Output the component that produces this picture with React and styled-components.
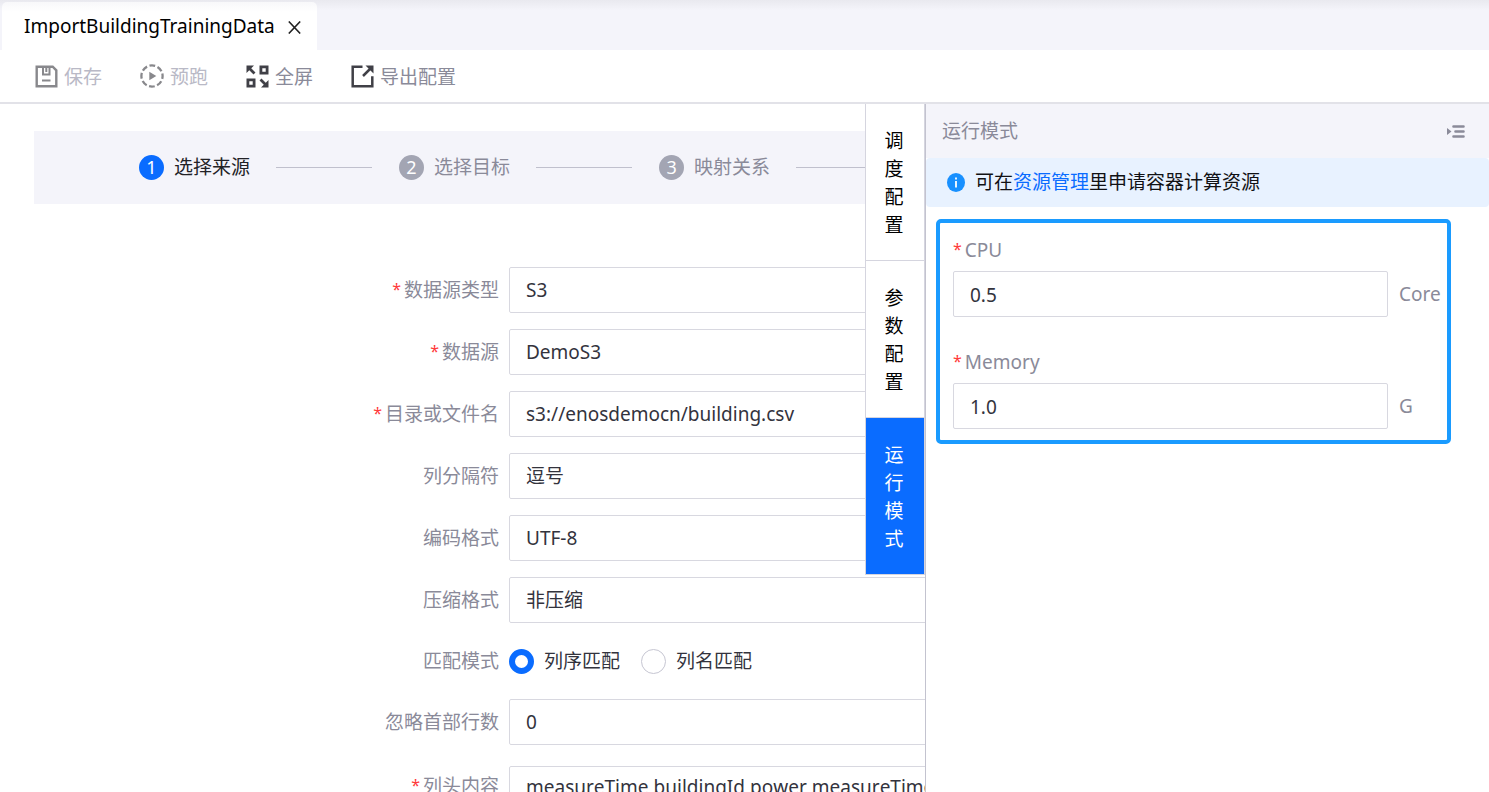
import React, { useState } from "react";
import styled, { createGlobalStyle, css } from "styled-components";

const Global = createGlobalStyle`
  *, *::before, *::after { box-sizing: border-box; }
  body {
    margin: 0;
    background: #fff;
    color: #33333d;
    font-family: "Noto Sans", "Noto Sans CJK SC", sans-serif;
    font-size: 19px;
    line-height: 28px;
  }
  button, input, select, textarea { font: inherit; color: inherit; }
`;

const Page = styled.div`
  display: flex;
  flex-direction: column;
  height: 100vh;
  overflow: hidden;
`;

const TabBar = styled.header`
  display: flex;
  flex: none;
  height: 50px;
  padding: 2px 2px 0;
  background: linear-gradient(#e9e9ef, #f4f4fa 10px);
`;

const FileTab = styled.div`
  display: flex;
  align-items: center;
  gap: 13px;
  padding: 0 16px 0 22px;
  border-radius: 5px 5px 0 0;
  background: linear-gradient(#f8f8fa, #fff 10px);
  color: #000;
`;

const IconButton = styled.button`
  display: flex;
  padding: 2px 0 0;
  border: 0;
  background: none;
  color: ${(p) => p.$color || "#222"};
  cursor: pointer;
`;

const Toolbar = styled.nav`
  display: flex;
  flex: none;
  align-items: center;
  gap: 38px;
  height: 54px;
  padding: 0 35px;
  border-bottom: 2px solid #e2e2e8;
`;

const ToolButton = styled.button`
  display: flex;
  align-items: center;
  gap: 6px;
  padding: 0;
  border: 0;
  background: none;
  color: #8a8a99;
  cursor: pointer;
  svg { color: #404047; }
  &:disabled {
    color: #b9b9c6;
    cursor: default;
    svg { color: #88888c; }
  }
`;

const ToolText = styled.span`
  padding-top: 2px;
`;

const Workspace = styled.div`
  display: flex;
  flex: 1;
  min-height: 0;
`;

const Canvas = styled.main`
  position: relative;
  flex: 1;
  min-width: 0;
  overflow: hidden;
`;

const Content = styled.div`
  min-width: 1100px;
  padding: 27px 34px;
`;

const Steps = styled.ol`
  display: flex;
  align-items: center;
  height: 73px;
  margin: 0 0 63px;
  padding: 0 105px 1px;
  background: #f4f4fa;
  list-style: none;
`;

const Step = styled.li`
  display: flex;
  align-items: center;
  color: ${(p) => (p.$active ? "#222226" : "#8a8a99")};
  &::after {
    content: "";
    width: 96px;
    height: 1px;
    margin: 0 27px 0 26px;
    background: #c0c0cd;
  }
`;

const StepNumber = styled.span`
  display: grid;
  place-items: center;
  width: 25px;
  height: 25px;
  margin-right: 10px;
  border-radius: 50%;
  background: ${(p) => (p.$active ? "#0a6cff" : "#a3a5b3")};
  color: #fff;
  font-size: 18px;
  line-height: 24px;
`;

const Form = styled.form`
  display: flex;
  flex-direction: column;
  gap: 16px;
`;

const Label = styled.label`
  color: #8a8a99;
  text-align: ${(p) => (p.$left ? "left" : "right")};
  ${(p) =>
    p.$required &&
    css`
      &::before {
        content: "*";
        margin-right: 3px;
        color: #ff3a3a;
        font-size: 16px;
        line-height: 16px;
        vertical-align: 2px;
      }
    `}
`;

const Row = styled.div`
  display: grid;
  grid-template-columns: 465px 1fr;
  column-gap: 10px;
  align-items: ${(p) => (p.$top ? "start" : "center")};
  padding-top: ${(p) => (p.$top ? "5px" : "0")};
  ${Label} { padding-top: ${(p) => (p.$top ? "6px" : "0")}; }
`;

const control = css`
  display: block;
  width: 100%;
  height: 46px;
  padding: 0 16px;
  border: 1px solid #d8d8e0;
  border-radius: 2px;
  background: #fff;
  font-kerning: none;
  outline: 0;
  &:focus { border-color: #0a6cff; }
`;

const TextInput = styled.input`${control}`;

const Select = styled.select`
  ${control}
  appearance: none;
`;

const TextArea = styled.textarea`
  ${control}
  height: 90px;
  padding-top: 6px;
  resize: none;
`;

const RadioGroup = styled.div`
  display: flex;
  align-items: center;
  gap: 21px;
  height: 44px;
`;

const RadioLabel = styled.label`
  display: flex;
  align-items: center;
  gap: 10px;
`;

const Radio = styled.input`
  appearance: none;
  width: 25px;
  height: 25px;
  margin: 0;
  border: 1px solid #c6c6d2;
  border-radius: 50%;
  background: #fff;
  &:checked {
    border: 6px solid #0a6cff;
  }
`;

const SideTabs = styled.div`
  position: absolute;
  top: 0;
  right: 0;
  width: 60px;
  border: 1px solid #d5d5df;
  border-top: 0;
  background: #fff;
`;

const SideTab = styled.button`
  display: block;
  width: 100%;
  height: 157px;
  padding: 1px 20px 0 18px;
  border: 0;
  border-bottom: 1px solid #d5d5df;
  background: ${(p) => (p.$active ? "#0a6cff" : "#fff")};
  color: ${(p) => (p.$active ? "#fff" : "#000")};
  cursor: pointer;
  &:last-child {
    height: 156px;
    border-bottom: 0;
  }
`;

const Panel = styled.aside`
  flex: none;
  width: 564px;
  border-left: 1px solid #c3c3cf;
  background: #fff;
`;

const PanelHeader = styled.div`
  display: flex;
  align-items: center;
  justify-content: space-between;
  height: 54px;
  padding: 0 24px 0 16px;
  background: #f4f4fa;
  color: #8a8a99;
`;

const PanelTitle = styled.h2`
  margin: 0;
  font-size: 19px;
  font-weight: 400;
`;

const Notice = styled.div`
  display: flex;
  align-items: center;
  gap: 10px;
  height: 49px;
  padding: 0 21px 1px;
  border-radius: 4px;
  background: #e8f2ff;
  color: #111114;
  a { color: #0a6cff; text-decoration: none; }
`;

const Resources = styled.form`
  display: flex;
  flex-direction: column;
  gap: 31px;
  margin: 12px 38px 0 10px;
  padding: 13px 4px 11px 13px;
  border: 4px solid #1a9bff;
  border-radius: 5px;
`;

const Resource = styled.div`
  display: grid;
  grid-template-columns: 1fr 44px;
  gap: 7px 11px;
  align-items: center;
  ${Label} { grid-column: 1 / -1; }
  ${TextInput} { padding-top: 2px; }
`;

const Unit = styled.span`
  color: #8a8a99;
`;

const CloseIcon = () => (
  <svg width="13" height="13" viewBox="0 0 13 13" fill="none" stroke="currentColor" strokeWidth="1.6" aria-hidden="true">
    <path d="M.8 .5l11.400 12M12.200 .5l-11.400 12" />
  </svg>
);

const SaveIcon = () => (
  <svg width="23" height="23" viewBox="0 0 23 23" fill="none" stroke="currentColor" strokeWidth="2.4" aria-hidden="true">
    <path d="M1.700 1.700h16l3.600 3.600v16h-19.600z" />
    <path d="M8 2v7.500h6.500v-7.500M11.300 3v4M7 15.500h8.500" strokeWidth="2" />
  </svg>
);

const RunIcon = () => (
  <svg width="24" height="24" viewBox="0 0 24 24" fill="none" stroke="currentColor" aria-hidden="true">
    <circle cx="12" cy="12" r="10.600" strokeWidth="2.300" strokeDasharray="5.800 2.525" strokeDashoffset="2.900" />
    <path d="M9.300 7.800v8.400l7-4.200z" fill="currentColor" stroke="none" />
  </svg>
);

const FullscreenIcon = () => (
  <svg width="23" height="23" viewBox="0 0 23 23" fill="none" stroke="currentColor" strokeWidth="2.800" aria-hidden="true">
    <path d="M14.900 1.900h6.200v6.200h-6.200zM1.900 14.900h6.200v6.200h-6.200z" />
    <path d="M2.500 2.500l6 6M14.500 14.500l6 6" />
    <path d="M.5.500h7.500l-7.500 7.500zM22.500 22.500v-7.500l-7.500 7.500z" fill="currentColor" stroke="none" />
  </svg>
);

const ExportIcon = () => (
  <svg width="23" height="23" viewBox="0 0 23 23" fill="none" stroke="currentColor" strokeWidth="2.500" aria-hidden="true">
    <path d="M11.500 1.700h-9.800v19.600h19.600v-10" />
    <path d="M12 11l7.500-7.500" />
    <path d="M14.500.500h8v8z" fill="currentColor" stroke="none" />
  </svg>
);

const CollapseIcon = () => (
  <svg width="18" height="14" viewBox="0 0 18 14" aria-hidden="true">
    <path d="M0 3v7l4.500-3.500z" fill="currentColor" />
    <path d="M6.500 1.500h10M8.500 6.500h8M6.500 11.500h10" stroke="currentColor" strokeWidth="2.600" strokeLinecap="round" />
  </svg>
);

const InfoIcon = () => (
  <svg width="18" height="19" viewBox="0 0 18 19" aria-hidden="true">
    <ellipse cx="9" cy="9.500" rx="9" ry="9.500" fill="#1890ff" />
    <path d="M9 4.500v2M9 8v6.500" stroke="#fff" strokeWidth="1.800" />
  </svg>
);

const steps = ["选择来源", "选择目标", "映射关系"];
const sideTabs = ["调度配置", "参数配置", "运行模式"];

const SelectRow = ({ id, label, required, value }) => (
  <Row>
    <Label htmlFor={id} $required={required}>{label}</Label>
    <Select id={id} defaultValue={value}>
      <option>{value}</option>
    </Select>
  </Row>
);

const InputRow = ({ id, label, required, value }) => (
  <Row>
    <Label htmlFor={id} $required={required}>{label}</Label>
    <TextInput id={id} defaultValue={value} />
  </Row>
);

const ResourceField = ({ id, label, value, unit }) => (
  <Resource>
    <Label htmlFor={id} $required $left>{label}</Label>
    <TextInput id={id} defaultValue={value} />
    <Unit>{unit}</Unit>
  </Resource>
);

export default function App() {
  const [active, setActive] = useState("运行模式");
  return (
    <Page>
      <Global />
      <TabBar>
        <FileTab>
          <span>ImportBuildingTrainingData</span>
          <IconButton type="button" aria-label="关闭"><CloseIcon /></IconButton>
        </FileTab>
      </TabBar>
      <Toolbar>
        <ToolButton type="button" disabled><SaveIcon /><ToolText>保存</ToolText></ToolButton>
        <ToolButton type="button" disabled><RunIcon /><ToolText>预跑</ToolText></ToolButton>
        <ToolButton type="button"><FullscreenIcon /><ToolText>全屏</ToolText></ToolButton>
        <ToolButton type="button"><ExportIcon /><ToolText>导出配置</ToolText></ToolButton>
      </Toolbar>
      <Workspace>
        <Canvas>
          <Content>
            <Steps>
              {steps.map((name, i) => (
                <Step key={name} $active={i === 0}>
                  <StepNumber $active={i === 0}>{i + 1}</StepNumber>
                  {name}
                </Step>
              ))}
            </Steps>
            <Form>
              <SelectRow id="type" label="数据源类型" required value="S3" />
              <SelectRow id="source" label="数据源" required value="DemoS3" />
              <InputRow id="path" label="目录或文件名" required value="s3://enosdemocn/building.csv" />
              <SelectRow id="separator" label="列分隔符" value="逗号" />
              <SelectRow id="encoding" label="编码格式" value="UTF-8" />
              <SelectRow id="compression" label="压缩格式" value="非压缩" />
              <Row role="radiogroup" aria-labelledby="match">
                <Label as="span" id="match">匹配模式</Label>
                <RadioGroup>
                  <RadioLabel><Radio type="radio" name="match" defaultChecked />列序匹配</RadioLabel>
                  <RadioLabel><Radio type="radio" name="match" />列名匹配</RadioLabel>
                </RadioGroup>
              </Row>
              <InputRow id="skip" label="忽略首部行数" value="0" />
              <Row $top>
                <Label htmlFor="columns" $required>列头内容</Label>
                <TextArea id="columns" defaultValue="measureTime,buildingId,power,measureTime" />
              </Row>
            </Form>
          </Content>
          <SideTabs>
            {sideTabs.map((name) => (
              <SideTab key={name} type="button" $active={name === active} onClick={() => setActive(name)}>
                {name}
              </SideTab>
            ))}
          </SideTabs>
        </Canvas>
        <Panel>
          <PanelHeader>
            <PanelTitle>运行模式</PanelTitle>
            <IconButton type="button" aria-label="收起" $color="#8a8a99"><CollapseIcon /></IconButton>
          </PanelHeader>
          <Notice>
            <InfoIcon />
            <span>可在<a href="#resources">资源管理</a>里申请容器计算资源</span>
          </Notice>
          <Resources id="resources">
            <ResourceField id="cpu" label="CPU" value="0.5" unit="Core" />
            <ResourceField id="memory" label="Memory" value="1.0" unit="G" />
          </Resources>
        </Panel>
      </Workspace>
    </Page>
  );
}
